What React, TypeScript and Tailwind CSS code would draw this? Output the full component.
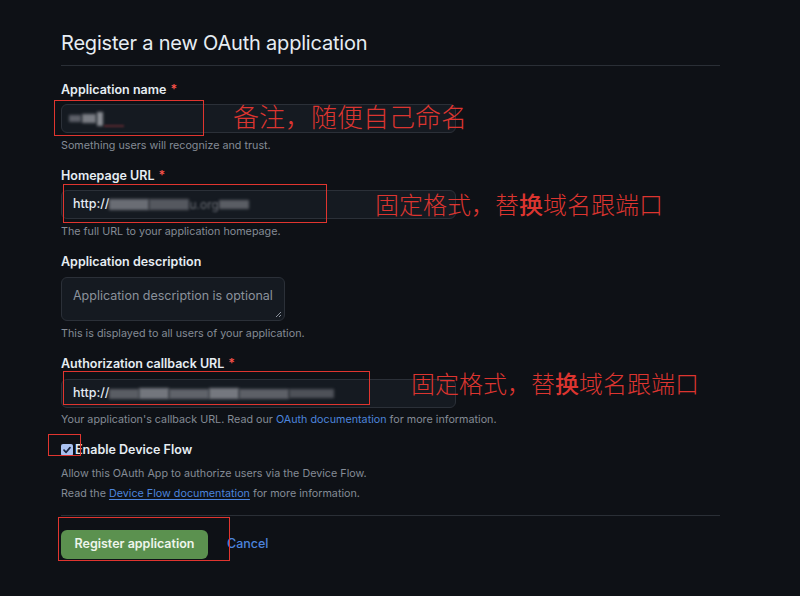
import React from "react";

function Blur({ w, h = 10, c = "#6d7077", o = 1 }: { w: number; h?: number; c?: string; o?: number }) {
  return (
    <span
      className="inline-block blur-[1.5px]"
      style={{ width: w, height: h, background: c, opacity: o }}
    />
  );
}

function Label({ children, req = false }: { children: React.ReactNode; req?: boolean }) {
  return (
    <div className="h-[18px] leading-[18px] text-[12.5px] font-semibold text-[#e6edf3]">
      {children}
      {req && <span className="text-[#f85149] ml-[4px]">*</span>}
    </div>
  );
}

function Hint({ children }: { children: React.ReactNode }) {
  return <div className="h-[16px] leading-[16px] text-[10.75px] text-[#848b95]">{children}</div>;
}

function Anno({ children, cls }: { children: React.ReactNode; cls: string }) {
  return (
    <div
      className={"absolute whitespace-nowrap leading-none font-light text-[#dc3530] " + cls}
      style={{ fontFamily: '"Noto Sans CJK SC", "Noto Sans", sans-serif' }}
    >
      {children}
    </div>
  );
}

function Box({ cls }: { cls: string }) {
  return <div className={"absolute border-[1.5px] border-[#e0352f] " + cls} />;
}

export default function App() {
  return (
    <div
      className="relative w-[800px] h-[596px] overflow-hidden bg-[#0e1116]"
      style={{ fontFamily: 'Inter, "Noto Sans", "Liberation Sans", sans-serif' }}
    >
      <div className="pl-[61px] pt-[29px] w-[720px]">
        <h2 className="h-[28px] leading-[28px] text-[20px] font-normal text-[#e6edf3] tracking-[-0.2px]">
          Register a new OAuth application
        </h2>
        <div className="mt-[8px] h-px bg-[#2a2f36]" />

        {/* Application name */}
        <div className="mt-[15px]">
          <Label req>Application name</Label>
          <div className="mt-[5px] w-[395px] h-[29px] rounded-[6px] border border-[#2b3038] bg-[#151a21] flex items-center pl-[7px] gap-[1px]">
            <Blur w={12} h={7} c="#5d6068" />
            <Blur w={14} h={9} c="#7a7d84" />
            <Blur w={6} h={14} c="#8a8d93" />
            <span className="inline-block w-[20px] h-[2px] mt-[14px] bg-[#5a2a30] blur-[1px]" />
          </div>
          <div className="mt-[5px]">
            <Hint>Something users will recognize and trust.</Hint>
          </div>
        </div>

        {/* Homepage URL */}
        <div className="mt-[13px]">
          <Label req>Homepage URL</Label>
          <div className="mt-[5px] w-[395px] h-[29px] rounded-[6px] border border-[#2b3038] bg-[#151a21] flex items-center pl-[11px]">
            <span className="text-[12.5px] font-medium text-[#e6edf3]">http://</span>
            <Blur w={40} h={11} c="#6a6d74" />
            <Blur w={40} h={11} c="#55585f" />
            <span className="text-[12px] text-[#6b6e75] blur-[1px]">u.org</span>
            <Blur w={30} h={9} c="#5a5d64" />
          </div>
          <div className="mt-[5px]">
            <Hint>The full URL to your application homepage.</Hint>
          </div>
        </div>

        {/* Application description */}
        <div className="mt-[13px]">
          <Label>Application description</Label>
          <div className="relative mt-[6px] w-[224px] h-[44px] rounded-[6px] border border-[#2b3038] bg-[#151a21] px-[11px] pt-[10px]">
            <div className="text-[12.5px] leading-[16px] text-[#8b929c]">Application description is optional</div>
            <svg className="absolute right-[2px] bottom-[2px]" width="7" height="7" viewBox="0 0 7 7">
              <path d="M6 1 L1 6 M6 4 L4 6" stroke="#8b929c" strokeWidth="1" />
            </svg>
          </div>
          <div className="mt-[5px]">
            <Hint>This is displayed to all users of your application.</Hint>
          </div>
        </div>

        {/* Authorization callback URL */}
        <div className="mt-[13px]">
          <Label req>Authorization callback URL</Label>
          <div className="mt-[6px] w-[395px] h-[29px] rounded-[6px] border border-[#2b3038] bg-[#151a21] flex items-center pl-[11px]">
            <span className="text-[12.5px] font-medium text-[#e6edf3]">http://</span>
            <Blur w={30} h={10} c="#5a5d64" />
            <Blur w={30} h={11} c="#73767d" />
            <Blur w={40} h={10} c="#60636a" />
            <Blur w={30} h={11} c="#75787f" />
            <Blur w={50} h={10} c="#5d6067" />
            <Blur w={45} h={9} c="#4e5158" />
          </div>
          <div className="mt-[4px]">
            <Hint>
              Your application's callback URL. Read our{" "}
              <span className="text-[#4c84dc]">OAuth documentation</span> for more information.
            </Hint>
          </div>
        </div>

        {/* Device flow */}
        <div className="mt-[13px] h-[18px] flex items-center">
          <span className="w-[12px] h-[12px] rounded-[2px] bg-[#a9c1f0] flex items-center justify-center">
            <svg width="10" height="10" viewBox="0 0 10 10">
              <path d="M2 5.2 L4.1 7.3 L8 2.6" stroke="#17243f" strokeWidth="1.7" fill="none" strokeLinecap="round" strokeLinejoin="round" />
            </svg>
          </span>
          <span className="ml-[2px] text-[12.5px] font-semibold text-[#e6edf3]">Enable Device Flow</span>
        </div>
        <div className="mt-[7px]">
          <Hint>Allow this OAuth App to authorize users via the Device Flow.</Hint>
        </div>
        <div className="mt-[4px]">
          <Hint>
            Read the <span className="text-[#4c84dc] underline underline-offset-2">Device Flow documentation</span> for
            more information.
          </Hint>
        </div>

        <div className="mt-[13px] h-px bg-[#2a2f36]" />

        <div className="mt-[14px] flex items-center">
          <button className="h-[29px] w-[147px] rounded-[6px] bg-[#5b914f] text-[12.5px] font-semibold text-[#eef5ec]">
            Register application
          </button>
          <span className="ml-[19px] text-[12.5px] font-medium text-[#4c84dc]">Cancel</span>
        </div>
      </div>

      {/* annotations */}
      <Box cls="left-[54px] top-[100px] w-[150px] h-[36px]" />
      <Box cls="left-[63px] top-[184px] w-[264px] h-[39px]" />
      <Box cls="left-[63px] top-[371px] w-[307px] h-[34px]" />
      <Box cls="left-[48px] top-[434px] w-[33px] h-[22px]" />
      <Box cls="left-[58px] top-[517px] w-[172px] h-[44px]" />

      <Anno cls="left-[233px] top-[103px] text-[26px]">备注，随便自己命名</Anno>
      <Anno cls="left-[375px] top-[192px] text-[24px]">
        固定格式，替<span className="font-medium">换</span>域名跟端口
      </Anno>
      <Anno cls="left-[411px] top-[371px] text-[24px]">
        固定格式，替<span className="font-medium">换</span>域名跟端口
      </Anno>
    </div>
  );
}
